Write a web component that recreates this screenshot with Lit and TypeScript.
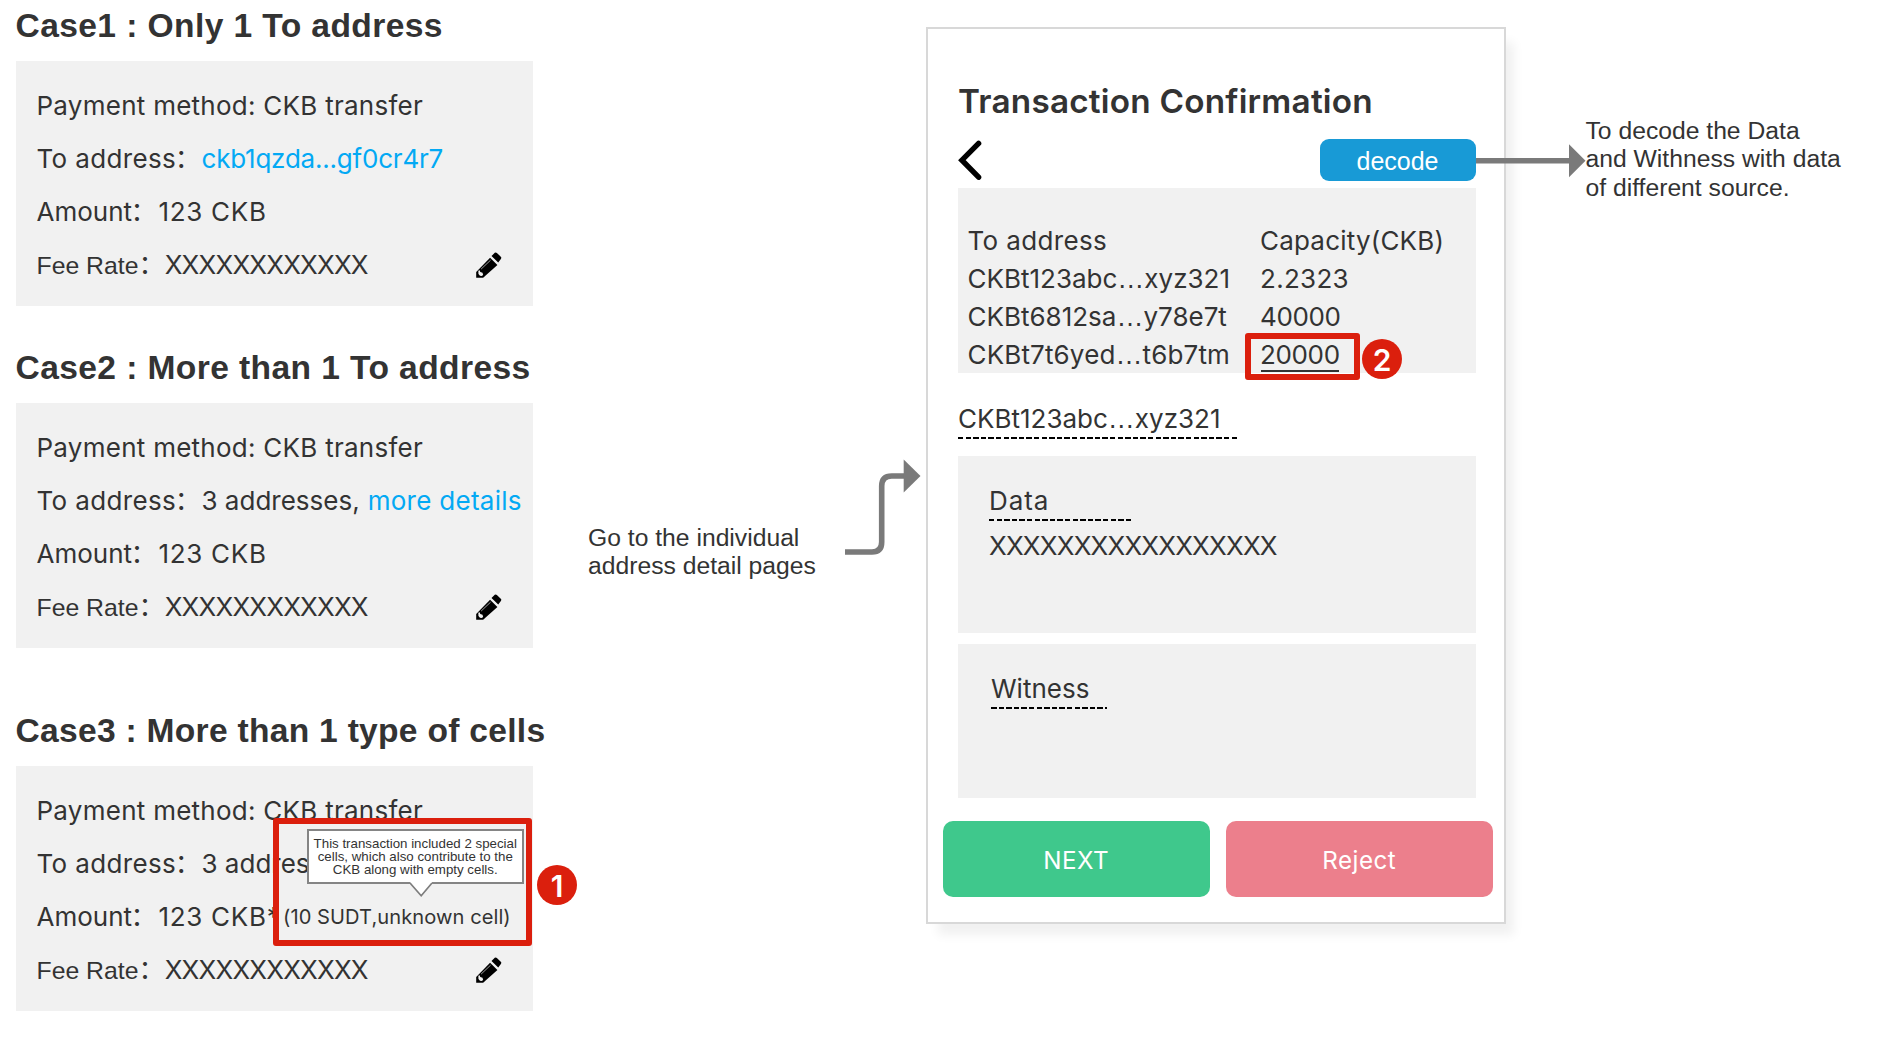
import { LitElement, html, css, nothing } from "lit";
import { customElement, property } from "lit/decorators.js";

const textFaces = css`
  :host {
    --ui: Inter, "Noto Sans CJK SC", sans-serif;
    --arial: "Liberation Sans", Arial, sans-serif;
    --cjk: "Noto Sans CJK SC", sans-serif;
  }
`;

@customElement("pencil-icon")
class PencilIcon extends LitElement {
  static styles = css`
    :host { display: block; width: 26px; height: 26px; }
    svg { display: block; }
  `;
  render() {
    return html`<svg width="26" height="26" viewBox="11 12.6 25.5 25.5">
      <path d="M11.2 32.2 24.8 18.2 32 25.3 18 37.8H11.2Z" fill="#000" />
      <path d="M26.2 16.6 29.4 13.4Q30.4 12.5 31.5 13.5L35.3 17.2Q36.3 18.3 35.4 19.4L32.8 22.9Z" fill="#000" />
      <path d="M16 29.4 25.3 20.6" stroke="#a8a8a8" stroke-width="0.9" fill="none" />
      <path d="M13.3 30.9 14.6 30.6 15.2 32.3 17.4 32.9 18 35.2 16.6 36.2 14.9 35.9 13.4 34.2Z" fill="#f1f1f1" />
    </svg>`;
  }
}

@customElement("case-card")
class CaseCard extends LitElement {
  @property() heading = "";
  @property({ reflect: true }) kind: "single" | "multi" | "special" = "single";

  static styles = [
    textFaces,
    css`
      :host { display: block; width: 517px; color: #333; }
      .heading {
        box-sizing: border-box; height: 50px; line-height: 50px; padding-top: 1px; margin: 0 0 11px -0.5px; white-space: nowrap;
        font-family: var(--arial); font-weight: 700; font-size: 33.6px; letter-spacing: 0.4px;
      }
      :host([kind="special"]) .heading { letter-spacing: 0.28px; }
      .card {
        box-sizing: border-box; height: 245px; padding: 18px 0 0 20.5px;
        background: #f1f1f1; font: 400 26px/53px var(--ui);
      }
      .row { display: flex; align-items: baseline; height: 53px; white-space: nowrap; }
      .method { letter-spacing: 0.26px; }
      .label { flex: none; }
      .label.to { width: 165px; letter-spacing: 0.36px; }
      .label.amount { width: 122px; }
      .label.fee { width: 128.2px; font-family: var(--arial); font-size: 24.8px; line-height: 1; }
      .colon { font-family: var(--cjk); font-size: 26px; line-height: 1; letter-spacing: 0; margin-left: -1.5px; }
      .label.fee .colon { margin-left: 0; }
      .link { color: #03a9f4; }
      .hash { letter-spacing: -0.21px; }
      .more { margin-left: 8px; letter-spacing: 0.28px; }
      .sum { letter-spacing: 0.7px; }
      .sum.starred { width: 124.5px; }
      .cells { font-size: 20.1px; line-height: 1; letter-spacing: 0.07px; position: relative; top: -2.5px; }
      .rate { letter-spacing: -0.81px; }
      .edit { margin: 0 31px 0 auto; align-self: center; }
    `,
  ];

  render() {
    const colon = html`<span class="colon">：</span>`;
    return html`
      <h2 class="heading">${this.heading}</h2>
      <div class="card">
        <div class="row"><span class="method">Payment method: CKB transfer</span></div>
        <div class="row">
          <span class="label to">To address${colon}</span>
          ${this.kind === "single"
            ? html`<span class="link hash">ckb1qzda...gf0cr4r7</span>`
            : html`<span>3 addresses,</span>`}
          ${this.kind === "multi" ? html`<span class="link more">more details</span>` : nothing}
        </div>
        <div class="row">
          <span class="label amount">Amount${colon}</span>
          ${this.kind === "special"
            ? html`<span class="sum starred">123 CKB*</span><span class="cells">(10 SUDT,unknown cell)</span>`
            : html`<span class="sum">123 CKB</span>`}
        </div>
        <div class="row">
          <span class="label fee">Fee Rate${colon}</span>
          <span class="rate">XXXXXXXXXXXX</span>
          <pencil-icon class="edit"></pencil-icon>
        </div>
      </div>
    `;
  }
}

interface Transfer { head: string; tail: string; amount: string; cls: string; }

const transfers: Transfer[] = [
  { head: "CKBt123abc", tail: "xyz321", amount: "2.2323", cls: "r1" },
  { head: "CKBt6812sa", tail: "y78e7t", amount: "40000", cls: "r2" },
  { head: "CKBt7t6yed", tail: "t6b7tm", amount: "20000", cls: "r3" },
];

@customElement("confirm-panel")
class ConfirmPanel extends LitElement {
  static styles = [
    textFaces,
    css`
      :host {
        display: block; box-sizing: border-box; width: 580px; height: 897px;
        padding: 52px 28.5px 0 30px; border: 2px solid #d8d8d8; background: #fff;
        box-shadow: 10px 13px 10px -2px rgba(0, 0, 0, 0.06);
        color: #333; font: 400 26px/38px var(--ui); white-space: nowrap;
      }
      .title { margin: 0; height: 40px; font-weight: 600; font-size: 33.3px; line-height: 40px; letter-spacing: 0.22px; }
      .bar { display: flex; justify-content: space-between; align-items: center; height: 42px; margin-top: 18px; }
      .back { display: block; }
      .decode {
        box-sizing: border-box; width: 156px; height: 42px; padding-top: 2px; border-radius: 9px;
        background: #189ad6; color: #fff; font: 400 25px/40px var(--arial); text-align: center;
      }
      .table {
        box-sizing: border-box; height: 184.5px; margin-top: 7px; padding: 34px 0 0 9.5px; background: #f1f1f1;
        display: grid; grid-template-columns: 292.5px auto; grid-auto-rows: 38px; justify-content: start;
      }
      .to { letter-spacing: 0.36px; }
      .capacity { letter-spacing: 0.2px; }
      .dots { font-family: var(--arial); font-size: 27px; line-height: 1; letter-spacing: 0; }
      .addr.r3 { letter-spacing: 0.15px; }
      .amt.r1 { letter-spacing: 0.3px; }
      .amt.r2, .amt.r3 { letter-spacing: -0.35px; }
      .amt.r3 {
        justify-self: start; height: 38px;
        background: linear-gradient(#333, #333) 1px 33.5px / 78px 2px no-repeat;
      }
      .dashed {
        box-sizing: border-box; height: 40px; padding-top: 1px;
        background: repeating-linear-gradient(90deg, #000 0 5.5px, transparent 5.5px 7.6px) left bottom / 100% 2px no-repeat;
      }
      .address { width: 279.5px; margin-top: 26.5px; }
      .box { box-sizing: border-box; background: #f1f1f1; padding: 25px 0 0 31px; }
      .data { height: 177px; margin-top: 17px; }
      .data .dashed { width: 143px; letter-spacing: 0.9px; }
      .payload { margin-top: 6px; letter-spacing: -0.81px; }
      .witness { height: 154px; margin-top: 11px; padding-left: 33px; }
      .witness .dashed { width: 116px; }
      .actions { display: flex; gap: 16.5px; margin: 23px -17px 0 -15px; }
      .action {
        box-sizing: border-box; flex: 1; height: 76px; padding-top: 3px; border-radius: 10px;
        color: #fff; font-size: 24.2px; line-height: 74px; text-align: center; letter-spacing: 0.48px;
      }
      .next { background: #3fc88c; }
      .reject { background: #ec7f8c; }
    `,
  ];

  render() {
    return html`
      <h1 class="title">Transaction Confirmation</h1>
      <div class="bar">
        <svg class="back" width="24" height="42" viewBox="0 0 24 42">
          <path d="M20.6 4.4 3.9 21.2 20.6 38.2" fill="none" stroke="#000" stroke-width="5.4" stroke-linecap="round" />
        </svg>
        <div class="decode">decode</div>
      </div>
      <div class="table">
        <span class="to">To address</span><span class="capacity">Capacity(CKB)</span>
        ${transfers.map(
          (t) => html`<span class="addr ${t.cls}">${t.head}<span class="dots">…</span>${t.tail}</span>
            <span class="amt ${t.cls}">${t.amount}</span>`
        )}
      </div>
      <div class="dashed address">CKBt123abc<span class="dots">…</span>xyz321</div>
      <div class="box data">
        <div class="dashed">Data</div>
        <div class="payload">XXXXXXXXXXXXXXXXX</div>
      </div>
      <div class="box witness"><div class="dashed">Witness</div></div>
      <div class="actions">
        <div class="action next">NEXT</div>
        <div class="action reject">Reject</div>
      </div>
    `;
  }
}

@customElement("app-root")
class AppRoot extends LitElement {
  static styles = [
    textFaces,
    css`
      :host { display: block; position: relative; width: 1890px; height: 1044px; overflow: hidden; background: #fff; color: #333; }
      .board { display: flex; align-items: flex-start; padding-left: 16px; }
      .cases { flex: none; }
      .second { margin-top: 36px; }
      .third { margin-top: 57px; }
      .note { flex: none; margin: 0; font: 400 24.7px/28.4px var(--arial); white-space: pre; }
      .pages { width: 338px; margin: 524px 0 0 55px; }
      .panel { flex: none; margin-top: 27px; }
      .sources { margin: 117px 0 0 79.5px; }
      .arrow { position: absolute; overflow: visible; }
      .to-panel { left: 844px; top: 459px; }
      .to-sources { left: 1475px; top: 144px; }
      .frame { position: absolute; box-sizing: border-box; border: 6px solid #db1f0d; border-radius: 3px; }
      .frame.cell { left: 273px; top: 818px; width: 258.5px; height: 127.5px; }
      .frame.amount { left: 1245px; top: 332.5px; width: 114.5px; height: 47.5px; }
      .badge {
        position: absolute; width: 40px; height: 40px; border-radius: 50%;
        background: #db1f0d; color: #fff; font: 600 30px/42px var(--ui); text-align: center;
      }
      .badge.one { left: 537px; top: 865px; }
      .badge.two { left: 1362px; top: 338.5px; }
      .tip {
        position: absolute; left: 307px; top: 828.5px; box-sizing: border-box; width: 216.5px; height: 55px;
        padding-top: 6px; border: 2px solid #858585; background: #fff;
        font: 400 13.3px/13.4px var(--arial); text-align: center; white-space: pre;
      }
      .tail { position: absolute; left: 101px; top: 51px; }
    `,
  ];

  render() {
    return html`
      <div class="board">
        <div class="cases">
          <case-card heading="Case1 : Only 1 To address" kind="single"></case-card>
          <case-card class="second" heading="Case2 : More than 1 To address" kind="multi"></case-card>
          <case-card class="third" heading="Case3 : More than 1 type of cells" kind="special"></case-card>
        </div>
        <p class="note pages">Go to the individual
address detail pages</p>
        <confirm-panel class="panel"></confirm-panel>
        <p class="note sources">To decode the Data
and Withness with data
of different source.</p>
      </div>

      <svg class="arrow to-panel" width="77" height="97">
        <path d="M1 93H28Q37.7 93 37.7 83V27Q37.7 17 47.7 17H61" fill="none" stroke="#7a7a7a" stroke-width="5.6" />
        <path d="M59.7 .5 76.5 17 59.7 33.5Z" fill="#7a7a7a" />
      </svg>
      <svg class="arrow to-sources" width="111" height="34">
        <path d="M1 16.7H95" fill="none" stroke="#7a7a7a" stroke-width="5.6" />
        <path d="M94 .2 110.5 16.7 94 33.2Z" fill="#7a7a7a" />
      </svg>

      <div class="tip">This transaction included 2 special
cells, which also contribute to the
CKB along with empty cells.<svg class="tail" width="22" height="16">
          <path d="M0 0H22V1L11.2 14.5.6 1Z" fill="#fff" />
          <path d="M0 1 11.2 13.8 22 1" fill="none" stroke="#7d7d7d" stroke-width="1.7" />
        </svg></div>
      <div class="frame cell"></div>
      <div class="badge one">1</div>
      <div class="frame amount"></div>
      <div class="badge two">2</div>
    `;
  }
}
